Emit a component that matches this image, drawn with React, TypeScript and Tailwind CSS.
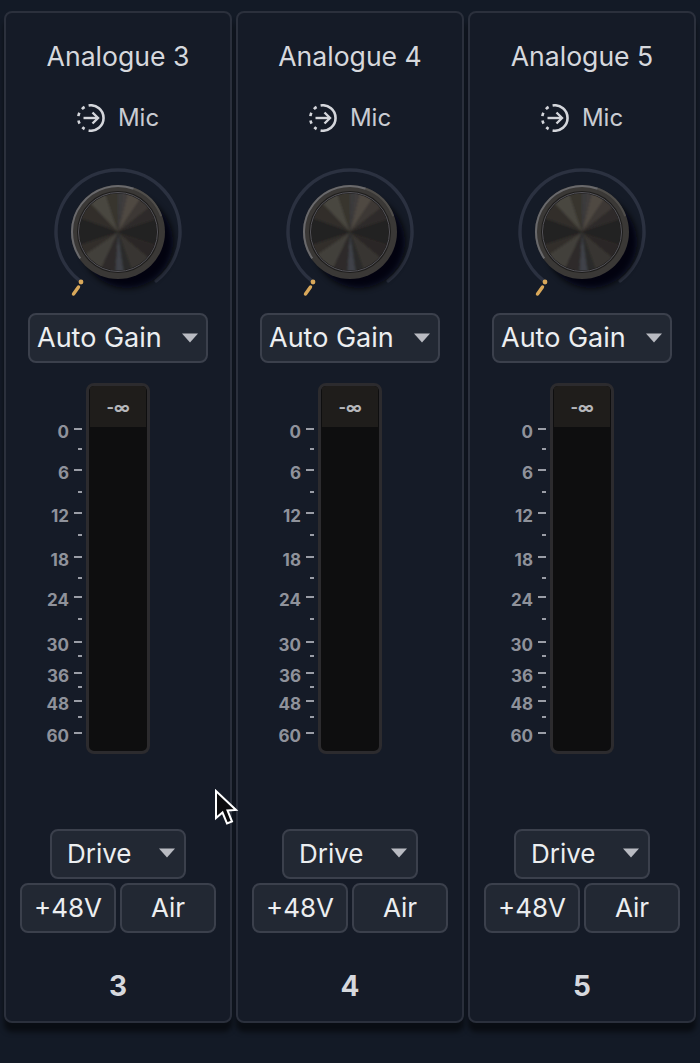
const font = "font-['Inter','Noto_Sans',sans-serif]"

const scale = [
  { label: '0', rowClass: 'h-[20px]' },
  { label: '', rowClass: 'h-[21px]' },
  { label: '6', rowClass: 'h-[22px]' },
  { label: '', rowClass: 'h-[21px]' },
  { label: '12', rowClass: 'h-[22px]' },
  { label: '', rowClass: 'h-[22px]' },
  { label: '18', rowClass: 'h-[21px]' },
  { label: '', rowClass: 'h-[19px]' },
  { label: '24', rowClass: 'h-[22px]' },
  { label: '', rowClass: 'h-[23px]' },
  { label: '30', rowClass: 'h-[14px]' },
  { label: '', rowClass: 'h-[17px]' },
  { label: '36', rowClass: 'h-[14px]' },
  { label: '', rowClass: 'h-[14px]' },
  { label: '48', rowClass: 'h-[16px]' },
  { label: '', rowClass: 'h-[16px]' },
  { label: '60', rowClass: 'h-[16px]' },
]

const wedges = [
  { from: 0, to: 6, fill: '#3a3a3c' },
  { from: 6, to: 14, fill: '#403e3d' },
  { from: 14, to: 34, fill: '#4f4a43' },
  { from: 34, to: 52, fill: '#3c3834' },
  { from: 52, to: 72, fill: '#2e2b29' },
  { from: 72, to: 108, fill: '#222120' },
  { from: 108, to: 130, fill: '#2a2826' },
  { from: 130, to: 160, fill: '#373431' },
  { from: 160, to: 172, fill: '#2c2b2c' },
  { from: 172, to: 184, fill: '#3f4248' },
  { from: 184, to: 205, fill: '#2e2c2b' },
  { from: 205, to: 236, fill: '#43403b' },
  { from: 236, to: 252, fill: '#302d2b' },
  { from: 252, to: 290, fill: '#222120' },
  { from: 290, to: 316, fill: '#302d2a' },
  { from: 316, to: 342, fill: '#4a463f' },
  { from: 342, to: 360, fill: '#38352f' },
]

function polar(radius: number, angle: number) {
  const rad = ((angle - 90) * Math.PI) / 180
  return `${64 + radius * Math.cos(rad)} ${64 + radius * Math.sin(rad)}`
}

function Knob({ id }: { id: number }) {
  return (
    <svg width="128" height="132" viewBox="0 0 128 132" className="block">
      <defs>
        <filter id={`knob-shadow-${id}`} x="-30%" y="-30%" width="160%" height="160%">
          <feGaussianBlur stdDeviation="3" />
        </filter>
        <filter id={`knob-soft-${id}`} x="-10%" y="-10%" width="120%" height="120%">
          <feGaussianBlur stdDeviation="1" />
        </filter>
        <clipPath id={`knob-face-${id}`}>
          <circle cx="64" cy="64" r="38.5" />
        </clipPath>
      </defs>
      <path
        d={`M ${polar(62, 218)} A 62 62 0 1 1 ${polar(62, 142)}`}
        fill="none"
        stroke="#2b3140"
        strokeWidth="3.5"
        strokeLinecap="round"
      />
      <circle cx="73" cy="74" r="46" fill="#05060a" opacity="0.9" filter={`url(#knob-shadow-${id})`} />
      <circle cx="64" cy="64" r="47" fill="#3a3836" />
      <path d={`M ${polar(46, 235)} A 46 46 0 0 1 ${polar(46, 20)}`} fill="none" stroke="#69696c" strokeWidth="2" />
      <path d={`M ${polar(46, 20)} A 46 46 0 0 1 ${polar(46, 70)}`} fill="none" stroke="#4f4d4a" strokeWidth="2" />
      <circle cx="64" cy="64" r="41" fill="#1e1d1c" />
      <circle cx="64" cy="64" r="39.5" fill="none" stroke="#55545a" strokeWidth="1" />
      <g clipPath={`url(#knob-face-${id})`}>
        <g filter={`url(#knob-soft-${id})`}>
          {wedges.map((w) => (
            <path
              key={w.from}
              d={`M 64 64 L ${polar(42, w.from)} A 42 42 0 0 1 ${polar(42, w.to)} Z`}
              fill={w.fill}
            />
          ))}
        </g>
      </g>
      <circle cx="27" cy="114" r="2.4" fill="#d9a85a" />
      <path d="M19.5 126 L24.5 119" stroke="#d9a85a" strokeWidth="3.4" strokeLinecap="round" />
    </svg>
  )
}

function InputIcon() {
  return (
    <svg width="28" height="28" viewBox="1 1 28 28" fill="none" stroke="#d4d6db" strokeWidth="2.6">
      <path d="M12.6 2.5 A12.7 12.7 0 1 1 12.6 27.5" />
      <path d="M8.6 4 A12.7 12.7 0 0 0 8.6 26" strokeDasharray="3.4 4.4" />
      <path d="M7.5 15 H22" strokeWidth="2.4" />
      <path d="M16.5 9.5 L22 15 L16.5 20.5" strokeWidth="2.4" />
    </svg>
  )
}

function Caret() {
  return (
    <svg width="18" height="10" viewBox="0 0 18 10" className="block">
      <path d="M1 0.5 H17 L9 9.5 Z" fill="#b9bbc2" />
    </svg>
  )
}

function Select({ label, className }: { label: string; className: string }) {
  return (
    <div
      className={`flex h-[50px] items-center justify-between rounded-lg border-2 border-[#3b404c] bg-[#222833] text-[#eceef0] ${className}`}
    >
      <span>{label}</span>
      <Caret />
    </div>
  )
}

function Channel({ n }: { n: number }) {
  return (
    <div className="flex h-[1012px] w-[228px] flex-col items-center rounded-lg border-2 border-[#2b303c] bg-[#151b27] shadow-[0_9px_5px_rgba(0,0,0,0.5)]">
      <div className="mt-[26px] h-[34px] text-[26.6px] leading-[34px] text-[#d6d8dd]">Analogue {n}</div>
      <div className="mt-[31px] flex h-[28px] items-center gap-[13px] text-[24px] text-[#c9ccd2]">
        <InputIcon />
        <span>Mic</span>
      </div>
      <div className="mt-[36px]">
        <Knob id={n} />
      </div>
      <Select label="Auto Gain" className="mt-[13px] w-[180px] pl-[7px] pr-[7px] text-[27px]" />
      <div className="mt-[20px] flex">
        <div className="w-[64px] pr-1 pt-[46px] font-bold">
          {scale.map((row, i) => (
            <div key={i} className={`relative flex justify-end ${row.rowClass}`}>
              <div className={`mt-[-1px] h-[2px] bg-[#9a9da6] ${row.label ? 'w-[8px]' : 'w-[4px]'}`} />
              {row.label && (
                <span className="absolute right-[13px] top-[-7px] text-[17px] leading-[20px] text-[#8f929b]">
                  {row.label}
                </span>
              )}
            </div>
          ))}
        </div>
        <div className="h-[371px] w-[64px] overflow-hidden rounded-lg border-[3px] border-[#2c2b2e] bg-[#0e0e0f]">
          <div className="mx-px flex h-[41px] items-center justify-center bg-[#1f1d1b] text-[16px] font-bold text-[#b5b6ba]">
            -∞
          </div>
        </div>
        <div className="w-[64px]" />
      </div>
      <Select label="Drive" className="mt-[75px] w-[136px] pb-[2px] pl-[15px] pr-[8px] text-[26px]" />
      <div className="mt-[4px] flex gap-1">
        <div className="flex h-[50px] w-[96px] items-center justify-center rounded-lg border-2 border-[#3b404c] bg-[#222833] pb-[2px] text-[26px] text-[#eceef0]">
          +48V
        </div>
        <div className="flex h-[50px] w-[96px] items-center justify-center rounded-lg border-2 border-[#3b404c] bg-[#222833] pb-[2px] text-[26px] text-[#eceef0]">
          Air
        </div>
      </div>
      <div className="mt-[34px] text-[28px] font-bold leading-[38px] text-[#d6d8dd]">{n}</div>
    </div>
  )
}

export default function App() {
  return (
    <div className={`relative flex h-[1063px] w-[700px] gap-1 overflow-hidden bg-[#131a26] pl-1 pt-[11px] ${font}`}>
      <Channel n={3} />
      <Channel n={4} />
      <Channel n={5} />
      {/* mouse pointer */}
      <svg width="26" height="38" viewBox="0 0 26 38" className="absolute left-[214px] top-[789px]">
        <path
          d="M2 2 V29 L8.5 23.5 L13 34.5 L18 32.5 L13.5 21.5 L22 21 Z"
          fill="#0b0b0d"
          stroke="#fff"
          strokeWidth="2"
        />
      </svg>
    </div>
  )
}
